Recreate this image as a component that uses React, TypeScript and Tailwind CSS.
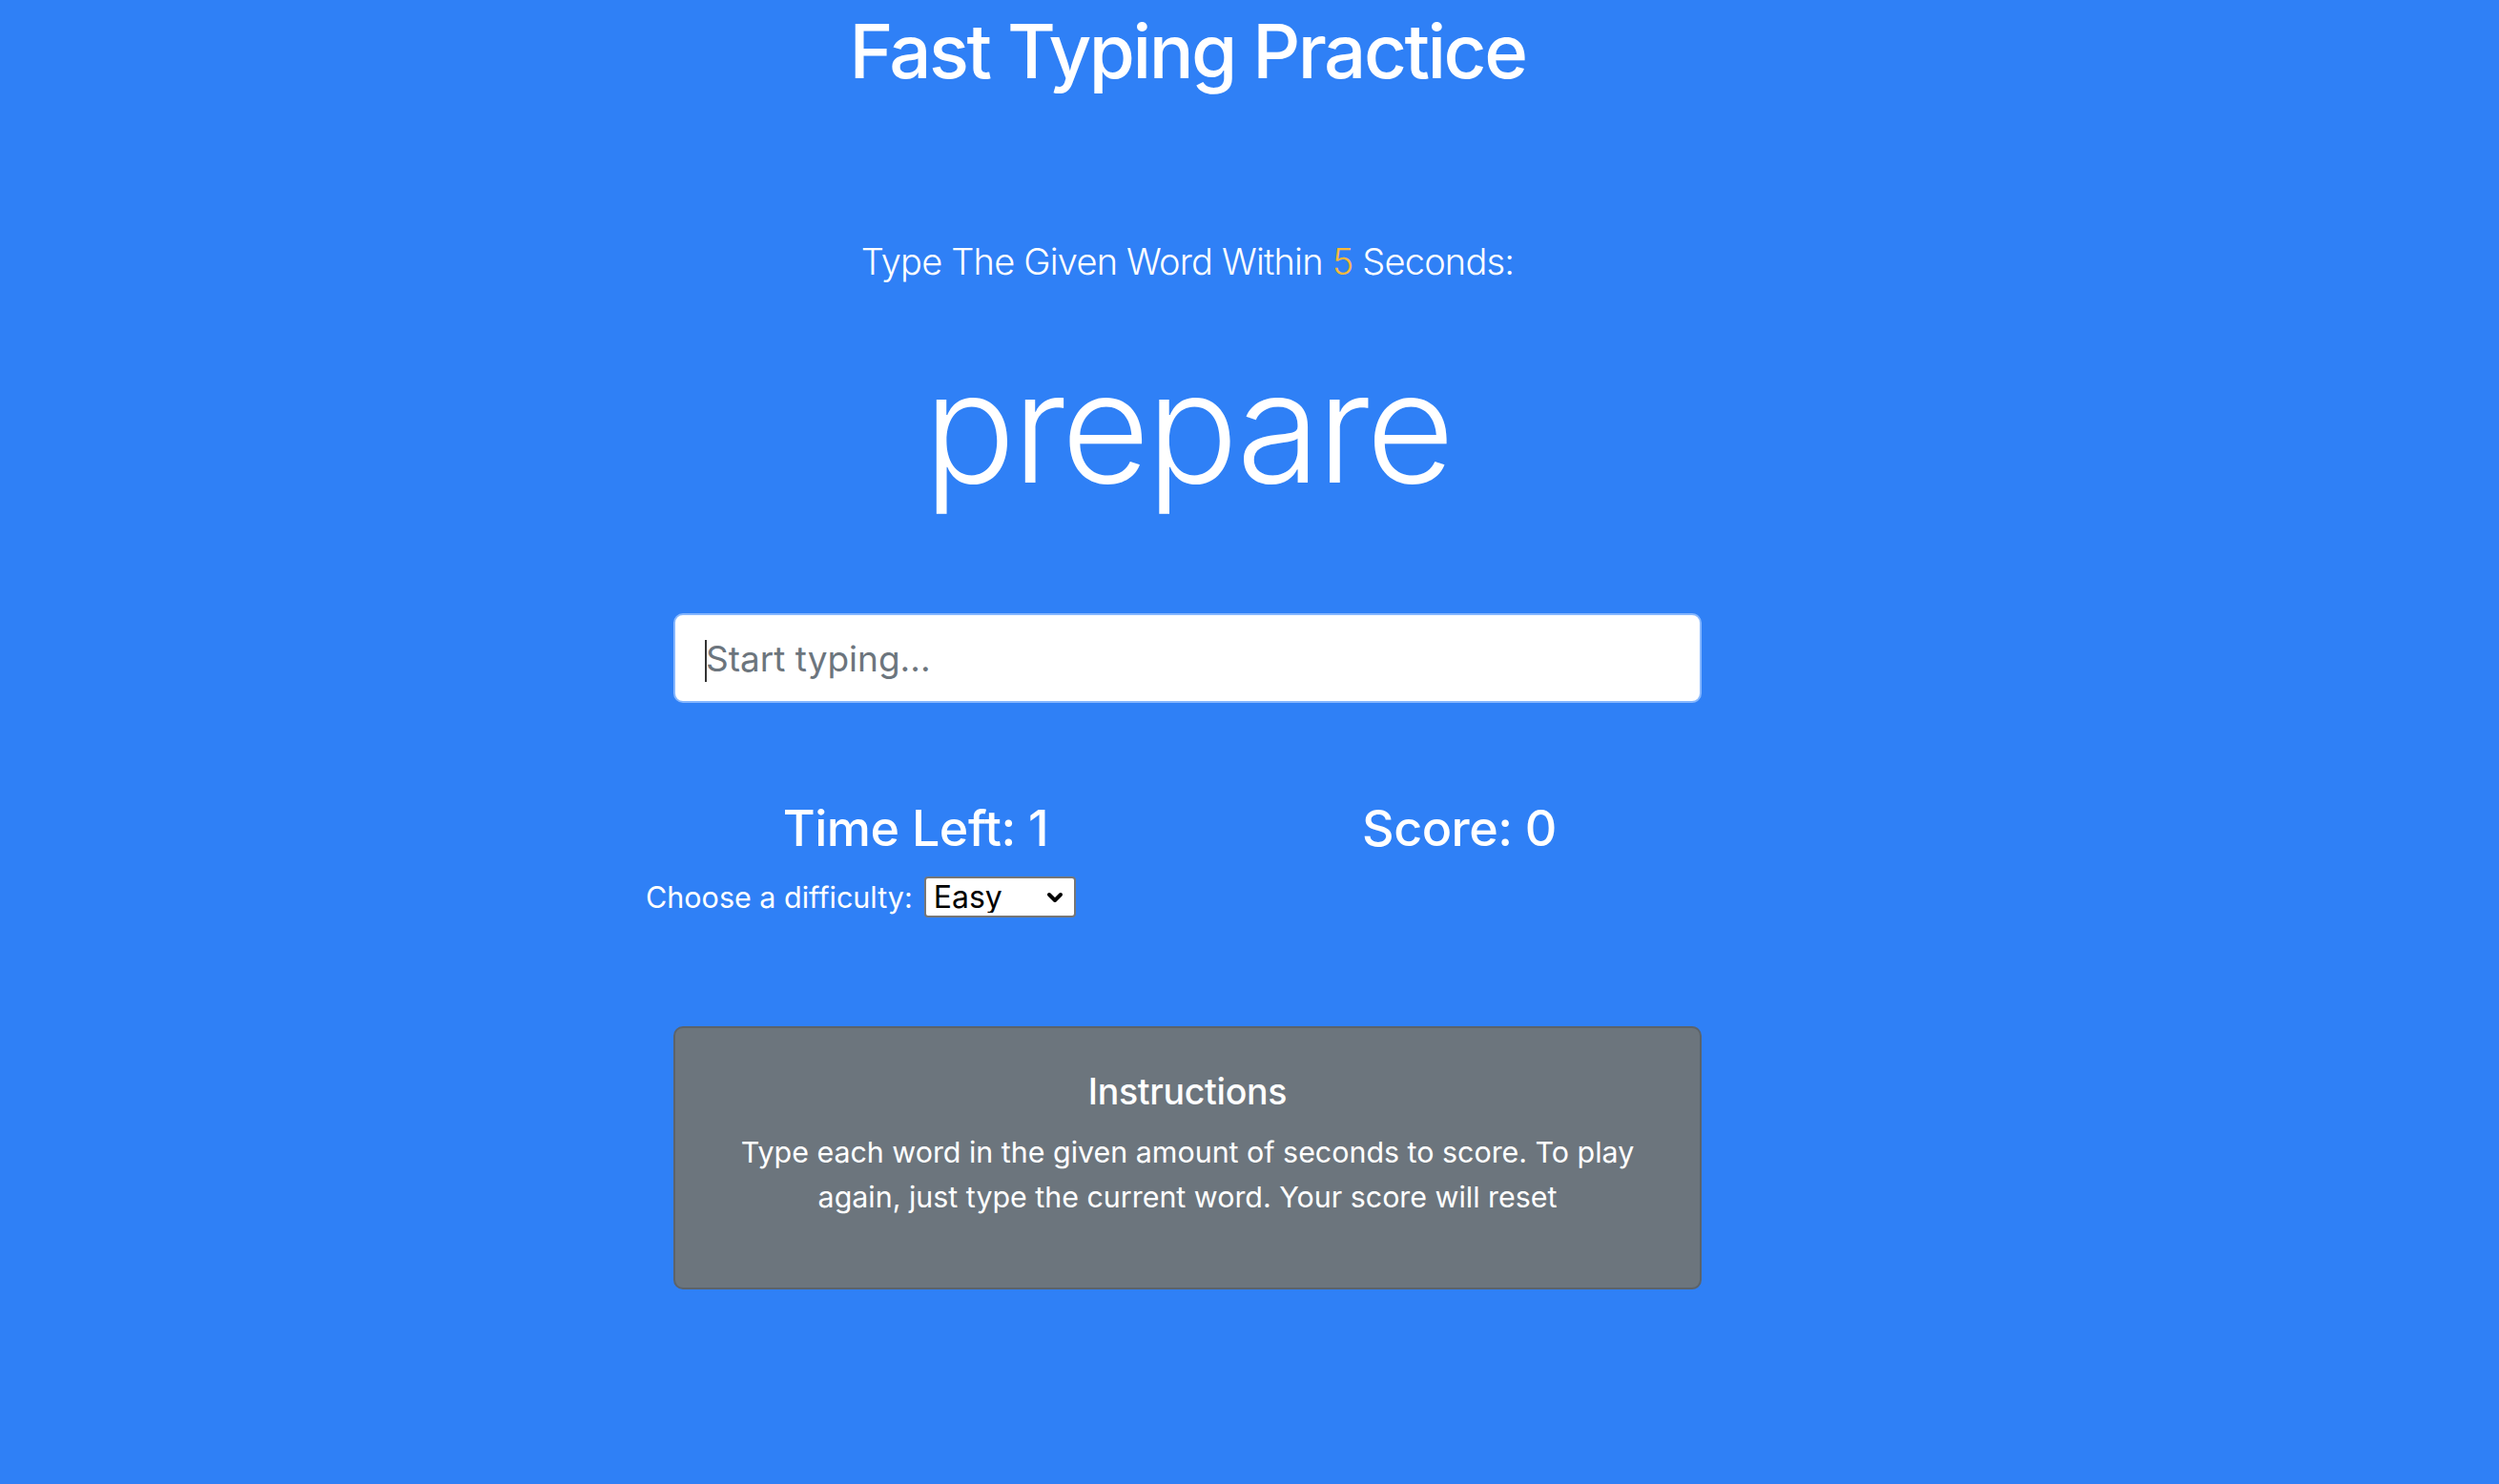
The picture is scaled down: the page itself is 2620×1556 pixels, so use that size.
import { ChevronDown } from 'lucide-react'

const font = "font-['Inter','Roboto','Liberation_Sans',sans-serif]"

function DifficultySelect() {
    return (
        <div className="relative w-[159px] h-[43px]">
            <select
                defaultValue="easy"
                className="appearance-none w-full h-full bg-white text-black border-2 border-[#767676] rounded-[4px] pl-[8px] text-[32px] leading-none outline-none"
            >
                <option value="easy">Easy</option>
                <option value="medium">Medium</option>
                <option value="hard">Hard</option>
            </select>
            <ChevronDown
                className="absolute right-[10px] top-[10px] w-[24px] h-[24px] text-black pointer-events-none"
                strokeWidth={4}
            />
        </div>
    )
}

export default function App() {
    return (
        <div className={`min-h-screen bg-[#2f80f6] text-white ${font}`}>
            <div className="w-[2490px] flex flex-col items-center">
                <h1 className="mt-[6px] text-[78px] leading-[96px] font-medium tracking-[-2.5px]">
                    Fast Typing Practice
                </h1>

                <p className="mt-[142px] text-[38px] leading-[60px] font-light tracking-[-0.8px]">
                    Type The Given Word Within <span className="text-[#f6b93b]">5</span> Seconds:
                </p>

                <h2 className="mt-[42px] text-[160px] leading-[204px] font-light tracking-[-3.5px]">prepare</h2>

                <div className="relative mt-[93px] w-[1078px]">
                    <input
                        type="text"
                        placeholder="Start typing..."
                        className="w-full h-[94px] bg-white border-2 border-[#86b7fe] rounded-[10px] px-[32px] text-[37px] text-[#212529] placeholder:text-[#6c757d] outline-none"
                    />
                    <span className="absolute left-[33px] top-[28px] w-[2px] h-[44px] bg-[#333]" />
                </div>

                <div className="mt-[98px] w-[1140px] flex flex-col">
                    <div className="grid grid-cols-2">
                        <h3 className="text-center text-[52px] leading-[67px] font-medium tracking-[-0.5px]">Time Left: 1</h3>
                        <h3 className="text-center text-[52px] leading-[67px] font-medium tracking-[-0.5px]">Score: 0</h3>
                    </div>
                    <div className="mt-[17px] flex items-center gap-[12px] pl-[2px]">
                        <label className="text-[30.5px] leading-[43px]">Choose a difficulty:</label>
                        <DifficultySelect />
                    </div>
                </div>

                <div className="mt-[114px] w-[1078px] bg-[#6c757d] border-2 border-[#5c636a] rounded-[10px] px-[32px] pt-[43px] pb-[39px] flex flex-col items-center text-center">
                    <h4 className="text-[37.5px] leading-[48px] font-medium tracking-[-0.3px]">Instructions</h4>
                    <p className="mt-[16px] text-[30.4px] leading-[47px] mb-[32px]">
                        Type each word in the given amount of seconds to score. To play again, just type the current word. Your score will reset
                    </p>
                </div>
            </div>
        </div>
    )
}
